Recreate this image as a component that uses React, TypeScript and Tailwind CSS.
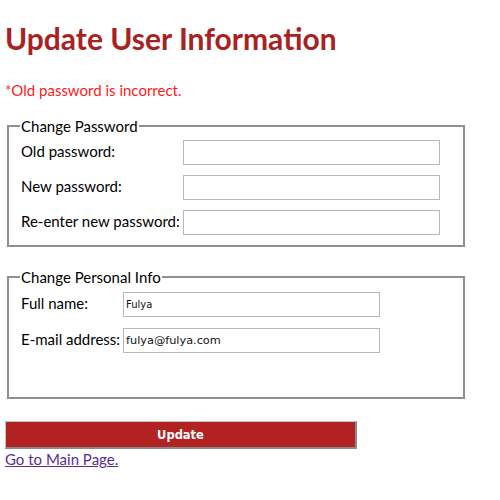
const Row = ({ label, value, labelWidth, small }: { label: string; value?: string; labelWidth: string; small?: boolean }) => (
  <div className="flex items-center h-[25px]">
    <label className={`${labelWidth} pl-px leading-[20px] -mt-[3px]`}>{label}</label>
    <input
      type="text"
      defaultValue={value}
      className={`w-[257px] h-[25px] bg-white border border-[#b8b8b8] px-[2px] text-[#111] font-['DejaVu_Sans',sans-serif] outline-none ${small ? "text-[10px]" : "text-[11.3px]"}`}
    />
  </div>
);

export default function App() {
  return (
    <div className="pl-[5px] pb-4 bg-white font-['Lato',sans-serif] text-[15px] text-black">
      <h1 className="pt-[20px] text-[30px] leading-[36px] font-bold text-[#a82222]">Update User Information</h1>

      <p className="mt-[24px] leading-[20px] text-[#ff1a1a]">*Old password is incorrect.</p>

      <fieldset className="mt-[16px] mx-[2px] w-[458px] border-2 border-[#8f8f8f] pl-[11px] pb-[10px]">
        <legend className="px-px leading-[20px]">Change Password</legend>
        <div className="flex flex-col gap-[10px] pt-[4px]">
          <Row label="Old password:" labelWidth="w-[163px]" />
          <Row label="New password:" labelWidth="w-[163px]" />
          <Row label="Re-enter new password:" labelWidth="w-[163px]" />
        </div>
      </fieldset>

      <fieldset className="mt-[20px] mx-[2px] w-[458px] border-2 border-[#8f8f8f] pl-[11px] pb-[44px]">
        <legend className="px-px leading-[20px]">Change Personal Info</legend>
        <div className="flex flex-col gap-[11px] pt-[5px]">
          <Row label="Full name:" value="Fulya" labelWidth="w-[103px]" small />
          <Row label="E-mail address:" value="fulya@fulya.com" labelWidth="w-[103px]" />
        </div>
      </fieldset>

      <button className="mt-[22px] block w-[352px] h-[28px] pt-[3px] bg-[#b22222] text-white text-[11.5px] font-bold font-['DejaVu_Sans',sans-serif] border-t border-l border-[#c4c4c4] border-r-2 border-b-2 border-r-[#8a8a8a] border-b-[#8a8a8a]">
        Update
      </button>

      <a href="#" className="block leading-[20px] text-[#5b2c91] underline w-fit">
        Go to Main Page.
      </a>
    </div>
  );
}
